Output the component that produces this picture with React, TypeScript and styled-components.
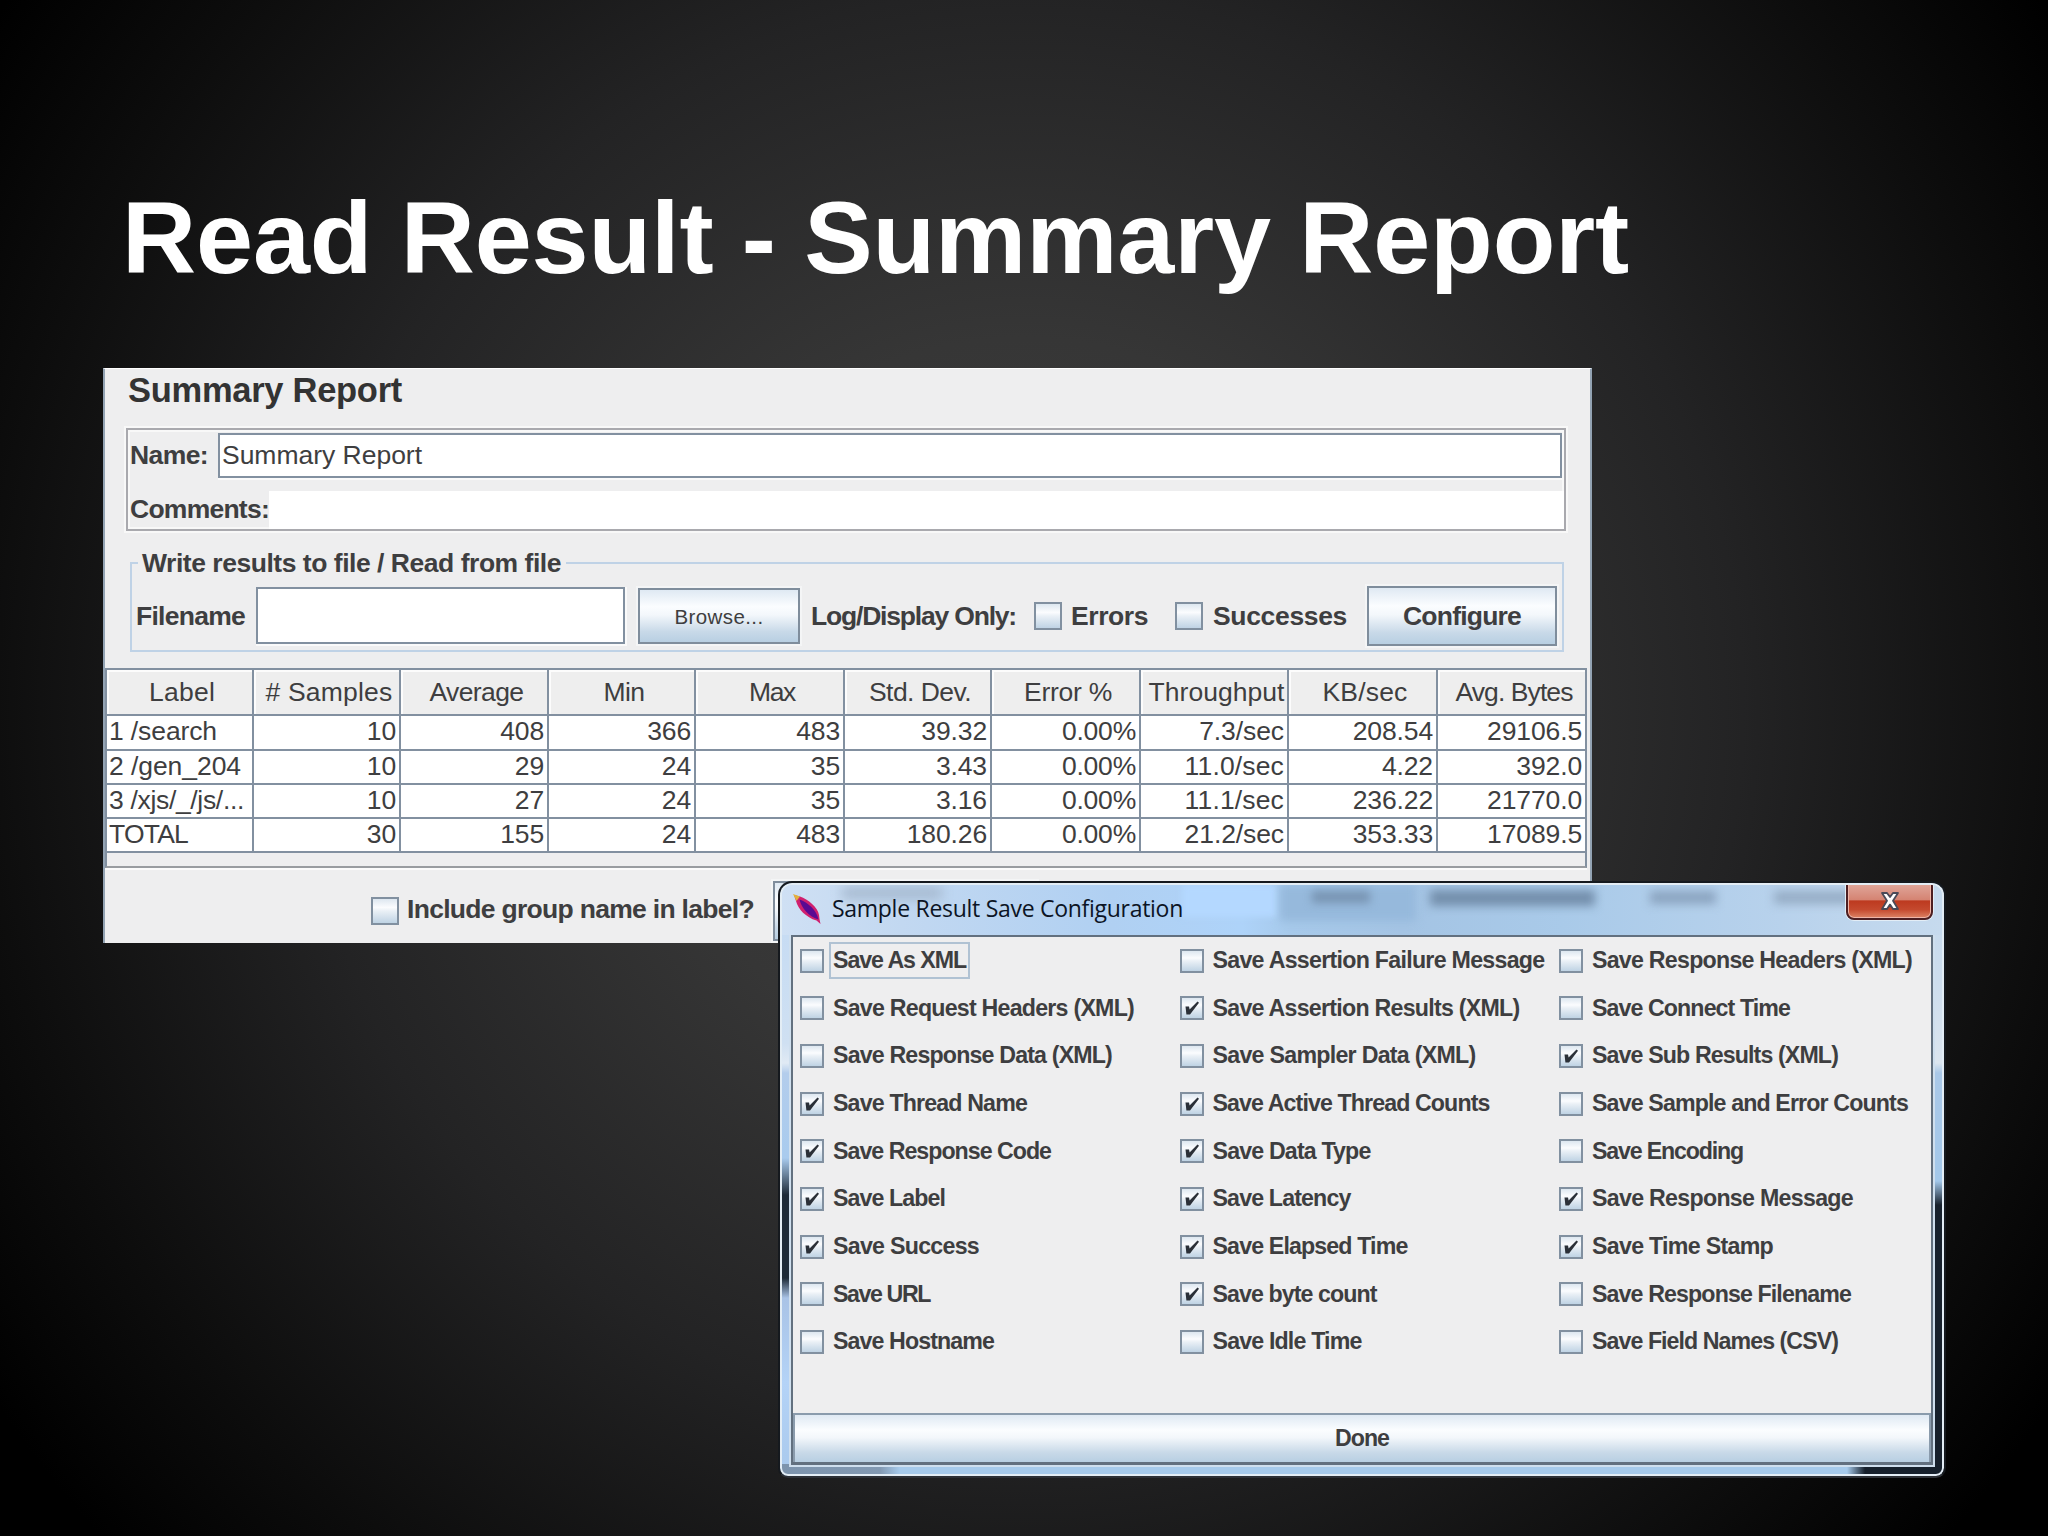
import React, { useLayoutEffect, useRef } from 'react';
import styled, { createGlobalStyle, css } from 'styled-components';

const Global = createGlobalStyle`
  html, body { margin: 0; padding: 0; background: #000; }
  *, *::before, *::after { box-sizing: border-box; }
`;

const sans = `'Liberation Sans', Arial, sans-serif`;
const metal = 'linear-gradient(#dfe9f3 0%, #fbfdff 32%, #f3f7fb 48%, #c8d9e8 80%, #b8cfe2 100%)';
const line = '#8290a0';

const Slide = styled.main`
  position: relative;
  width: 2048px;
  height: 1536px;
  overflow: hidden;
  background: radial-gradient(circle 1240px at 1024px 710px, #3f3f3f 0%, #363636 30%, #232324 58%, #0d0d0d 84%, #000 100%);
  font-family: ${sans};
  color: #333;
`;

const SlideTitle = styled.h1`
  margin: 0;
  padding: 179px 0 0 122px;
  font-size: 102.6px;
  line-height: 118px;
  font-weight: 700;
  color: #fff;
  white-space: nowrap;
`;

const Label = styled.span<{ $size?: number; $bold?: boolean; $family?: string; $color?: string; $left?: number; $lift?: number; $drop?: number }>`
  display: inline-block;
  flex: none;
  white-space: pre;
  font-family: ${p => p.$family ?? sans};
  font-size: ${p => p.$size ?? 26.5}px;
  line-height: 1.15;
  font-weight: ${p => (p.$bold ? 700 : 400)};
  color: ${p => p.$color ?? '#3e3e40'};
  margin-left: ${p => p.$left ?? 0}px;
  padding-bottom: ${p => p.$lift ?? 0}px;
  padding-top: ${p => p.$drop ?? 0}px;
`;

type FitProps = React.ComponentProps<typeof Label> & { w: number; children: string };

/** A label whose tracking is adjusted so that it spans the given width. */
function Fit({ w, children, ...rest }: FitProps) {
  const ref = useRef<HTMLSpanElement>(null);
  useLayoutEffect(() => {
    const el = ref.current;
    if (!el) return;
    el.style.letterSpacing = '0px';
    const natural = el.getBoundingClientRect().width;
    el.style.letterSpacing = `${(w - natural) / children.length}px`;
  }, [w, children]);
  return <Label ref={ref} {...rest}>{children}</Label>;
}

/* ---------- report panel ---------- */

const Panel = styled.section`
  position: absolute;
  left: 103px;
  top: 368px;
  width: 1489px;
  height: 575px;
  display: flex;
  flex-direction: column;
  background: #eeeeef;
  border: solid #93a3b3;
  border-width: 1px 2px 0 2px;
  border-top-color: #fff;
`;

const Heading = styled.header`
  display: flex;
  align-items: center;
  height: 42px;
  padding: 2px 0 0 23px;
`;

const NameGroup = styled.div`
  margin: 17px 24px 0 21px;
  height: 103px;
  border: 2px solid #a9a9ae;
  box-shadow: 0 0 0 2px #f8f8f8, inset 0 0 0 2px #f8f8f8;
  display: flex;
  flex-direction: column;
`;

const NameRow = styled.div`
  display: flex;
  align-items: center;
  height: 50px;
  padding: 0 2px;
`;

const CommentsRow = styled.div`
  display: flex;
  align-items: center;
  height: 38px;
  margin-top: 11px;
  padding-left: 2px;
`;

const TextField = styled.div<{ $w?: number; $h: number; $left?: number }>`
  ${p => (p.$w ? css`width: ${p.$w}px; flex: none;` : css`flex: 1;`)}
  height: ${p => p.$h}px;
  margin-left: ${p => p.$left ?? 0}px;
  display: flex;
  align-items: center;
  padding-left: 2px;
  background: #fff;
  border: 2px solid ${line};
  box-shadow: 1px 1px 0 1px #fafafa;
`;

const CommentsField = styled.div`
  flex: 1;
  height: 38px;
  background: #fff;
`;

const FileGroup = styled.fieldset`
  margin: 18px 26px 0 25px;
  padding: 0;
  height: 103px;
  min-width: 0;
  border: 2px solid #bfd2e6;
`;

const Legend = styled.legend`
  margin-left: 6px;
  padding: 0 5px 0 4px;
  height: 28px;
  line-height: 26px;
  display: flex;
  align-items: center;
`;

const FileRow = styled.div`
  display: flex;
  align-items: center;
  height: 73px;
  padding: 4px 0 0 4px;
`;

const MetalButton = styled.div<{ $w: number; $h: number; $left: number }>`
  flex: none;
  display: flex;
  align-items: center;
  justify-content: center;
  width: ${p => p.$w}px;
  height: ${p => p.$h}px;
  margin-left: ${p => p.$left}px;
  background: ${metal};
  border: 2px solid #7f8d9c;
  box-shadow: 0 0 0 2px #f4f5f6;
`;

const Box = styled.span<{ $size: number; $left?: number }>`
  flex: none;
  display: flex;
  width: ${p => p.$size}px;
  height: ${p => p.$size}px;
  margin-left: ${p => p.$left ?? 0}px;
  background: linear-gradient(#dde7f0 0%, #fbfcfe 35%, #eaf0f6 50%, #bfd3e4 100%);
  border: 2px solid #8190a0;
`;

const Table = styled.div`
  margin: 16px 3px 0 0;
  height: 200px;
  border: 2px solid ${line};
  border-bottom-color: #999ca0;
  box-shadow: 0 2px 0 #fbfbfb;
  display: flex;
  flex-direction: column;
`;

const Row = styled.div<{ $h: number }>`
  display: grid;
  grid-template-columns: 147px 147px 148px 147px 149px 147px 149px 148px 149px 1fr;
  height: ${p => p.$h}px;
  flex: none;
`;

const HeadCell = styled.div`
  display: flex;
  align-items: center;
  justify-content: center;
  padding: 1px 0 0 5px;
  border: solid ${line};
  border-width: 0 2px 2px 0;
  background: #eeeeee;
  box-shadow: inset 3px 3px 0 -1px #fcfcfc;
  overflow: hidden;
  &:last-child { border-right: 0; }
`;

const Cell = styled.div<{ $text?: boolean }>`
  display: flex;
  align-items: center;
  justify-content: ${p => (p.$text ? 'flex-start' : 'flex-end')};
  padding: 0 3px 2px 2px;
  background: #fff;
  border: solid ${line};
  border-width: 0 2px 2px 0;
  &:last-child { border-right: 0; }
`;

const Footer = styled.div`
  display: flex;
  align-items: center;
  height: 60px;
  margin-top: 13px;
  padding-left: 266px;
`;

/* ---------- dialog ---------- */

const Dialog = styled.section`
  position: absolute;
  left: 778px;
  top: 881px;
  width: 1168px;
  height: 597px;
  display: flex;
  flex-direction: column;
  padding: 0 11px 11px 11px;
  border: 2px solid #15191e;
  border-bottom-color: #2c3036;
  border-radius: 14px 14px 10px 10px;
  background:
    linear-gradient(90deg, #7d94ad 0, #8299b2 100px, transparent 120px, transparent 1067px, #16202c 1085px) 0 100% / 100% 12px no-repeat,
    linear-gradient(#c3daf4 0, #cfe0f2 160px, #e0eaf4 180px, #b3cdec 190px, #a9cbee 275px, #1d2a38 312px, #1d2a38 395px, #a9c3e6 415px, #b4d3f7 500px, #a9c9ec 100%) 0 0 / 14px 100% no-repeat,
    linear-gradient(#c4d9ee 0, #cddded 100px, #dbe5ef 180px, #a9c8e8 190px, #a3c8ea 298px, #17212d 322px, #17202b 100%) 100% 0 / 14px 100% no-repeat,
    #a6caeb;
  box-shadow: inset 0 0 0 2px #e3edf5;
`;

const TitleBar = styled.div`
  position: relative;
  height: 50px;
  flex: none;
  margin: 2px -9px 0 -9px;
  border-radius: 10px 10px 0 0;
  display: flex;
  align-items: flex-start;
  padding-left: 11px;
  overflow: hidden;
  background: linear-gradient(90deg, #cfe0f4 0, #c2d8f1 120px, #b0d0f2 330px, #aed3f9 460px, #a6c9ea 510px, #a4c4e4 620px, #a9cae9 780px, #b8d2ec 1000px, #c6daee 100%);
`;

const Ghost = styled.span<{ $x: number; $y: number; $w: number; $h: number; $c: string; $blur?: number }>`
  position: absolute;
  left: ${p => p.$x}px;
  top: ${p => p.$y}px;
  width: ${p => p.$w}px;
  height: ${p => p.$h}px;
  background: ${p => p.$c};
  filter: blur(${p => p.$blur ?? 6}px);
`;

const Feather = styled.svg`
  position: relative;
  flex: none;
  margin-top: 9px;
`;

const TitleText = styled.div`
  position: relative;
  margin: 10px 0 0 9px;
`;

const CloseButton = styled.div`
  position: absolute;
  right: 9px;
  top: -3px;
  width: 87px;
  height: 38px;
  display: flex;
  align-items: center;
  justify-content: center;
  border: 2px solid #4d1f22;
  border-radius: 0 0 8px 8px;
  background: linear-gradient(#e0a79b 0%, #d58473 46%, #bd3a20 50%, #c4492e 75%, #dd8466 100%);
  box-shadow: inset 0 0 0 1px #efb5a8, 0 0 0 1px #e3edf6;
`;

const Client = styled.div`
  flex: 1;
  display: flex;
  flex-direction: column;
  background: #eeeeef;
  border: 2px solid #62707f;
  border-bottom-width: 3px;
  box-shadow: 0 0 0 2px #cfdfee;
`;

const Options = styled.div`
  flex: 1;
  display: grid;
  grid-template-columns: 379.5px 379.5px 1fr;
  grid-auto-rows: 47.67px;
  padding: 0 0 0 7px;
`;

const Option = styled.div`
  display: flex;
  align-items: center;
`;

const OptionText = styled.span<{ $focus?: boolean }>`
  display: flex;
  align-items: center;
  height: 37px;
  margin-left: 5px;
  padding: 0 2px 1px 2px;
  border: 2px solid ${p => (p.$focus ? '#b0c2d3' : 'transparent')};
`;

const DoneButton = styled.div`
  flex: none;
  height: 49px;
  display: flex;
  align-items: center;
  justify-content: center;
  background: ${metal};
  border: 2px solid #8a9bac;
  border-bottom-width: 0;
`;

const columns: [string, number][] = [
  ['Label', 66], ['# Samples', 127], ['Average', 94], ['Min', 41], ['Max', 46],
  ['Std. Dev.', 102], ['Error %', 88], ['Throughput', 136], ['KB/sec', 85], ['Avg. Bytes', 117],
];

const rows: { h: number; cells: string[]; w: number }[] = [
  { h: 35, w: 108, cells: ['1 /search', '10', '408', '366', '483', '39.32', '0.00%', '7.3/sec', '208.54', '29106.5'] },
  { h: 34, w: 132, cells: ['2 /gen_204', '10', '29', '24', '35', '3.43', '0.00%', '11.0/sec', '4.22', '392.0'] },
  { h: 34, w: 135, cells: ['3 /xjs/_/js/...', '10', '27', '24', '35', '3.16', '0.00%', '11.1/sec', '236.22', '21770.0'] },
  { h: 34, w: 79, cells: ['TOTAL', '30', '155', '24', '483', '180.26', '0.00%', '21.2/sec', '353.33', '17089.5'] },
];

type Opt = [string, number, boolean?];
const options: Opt[][] = [
  [['Save As XML', 133], ['Save Assertion Failure Message', 332], ['Save Response Headers (XML)', 320]],
  [['Save Request Headers (XML)', 301], ['Save Assertion Results (XML)', 307, true], ['Save Connect Time', 198]],
  [['Save Response Data (XML)', 279], ['Save Sampler Data (XML)', 263], ['Save Sub Results (XML)', 246, true]],
  [['Save Thread Name', 194, true], ['Save Active Thread Counts', 277, true], ['Save Sample and Error Counts', 316]],
  [['Save Response Code', 218, true], ['Save Data Type', 158, true], ['Save Encoding', 151]],
  [['Save Label', 112, true], ['Save Latency', 138, true], ['Save Response Message', 261, true]],
  [['Save Success', 146, true], ['Save Elapsed Time', 195, true], ['Save Time Stamp', 181, true]],
  [['Save URL', 97], ['Save byte count', 164, true], ['Save Response Filename', 259]],
  [['Save Hostname', 161], ['Save Idle Time', 149], ['Save Field Names (CSV)', 246]],
];

const digitWidth = (s: string) =>
  s.split('').reduce((a, c) => a + (c === '.' || c === '/' ? 7.3 : c === '%' ? 23 : c === 's' || c === 'c' ? 13.2 : 14.6), 0);

const Tick = () => (
  <svg width="20" height="20" viewBox="0 0 20 20">
    <path d="M3.5 8.5 L7 8.5 L7.6 11.5 L15.5 3.6 L17 4.8 L8 16.5 L4.4 16.5 Z" fill="#2b3038" />
  </svg>
);

export default function App() {
  return (
    <>
      <Global />
      <Slide>
        <SlideTitle><Fit w={1507} $size={102.6} $bold $color="#fff">Read Result - Summary Report</Fit></SlideTitle>

        <Panel>
          <Heading><Fit w={274} $size={34.5} $bold $color="#333">Summary Report</Fit></Heading>
          <NameGroup>
            <NameRow>
              <Fit w={78} $bold>Name:</Fit>
              <TextField $h={45} $left={10}><Fit w={200}>Summary Report</Fit></TextField>
            </NameRow>
            <CommentsRow>
              <Fit w={139} $bold $lift={2}>Comments:</Fit>
              <CommentsField />
            </CommentsRow>
          </NameGroup>
          <FileGroup>
            <Legend><Fit w={419} $bold>Write results to file / Read from file</Fit></Legend>
            <FileRow>
              <Fit w={109} $bold $drop={1}>Filename</Fit>
              <TextField $w={369} $h={57} $left={11} />
              <MetalButton $w={162} $h={56} $left={13}><Fit w={89} $size={20.5} $drop={2}>Browse...</Fit></MetalButton>
              <Fit w={205} $bold $left={11} $drop={1}>Log/Display Only:</Fit>
              <Box $size={28} $left={18} />
              <Fit w={77} $bold $left={9} $drop={1}>Errors</Fit>
              <Box $size={28} $left={27} />
              <Fit w={134} $bold $left={10} $drop={1}>Successes</Fit>
              <MetalButton $w={190} $h={60} $left={20}><Fit w={118} $bold $drop={1}>Configure</Fit></MetalButton>
            </FileRow>
          </FileGroup>
          <Table>
            <Row $h={46}>
              {columns.map(([name, w]) => (
                <HeadCell key={name}><Fit w={w}>{name}</Fit></HeadCell>
              ))}
            </Row>
            {rows.map(r => (
              <Row key={r.cells[0]} $h={r.h}>
                {r.cells.map((c, i) => (
                  <Cell key={i} $text={i === 0}><Fit w={i === 0 ? r.w : digitWidth(c)}>{c}</Fit></Cell>
                ))}
              </Row>
            ))}
          </Table>
          <Footer>
            <Box $size={28} />
            <Fit w={347} $bold $left={8} $lift={3}>Include group name in label?</Fit>
            <MetalButton $w={264} $h={60} $left={19} />
          </Footer>
        </Panel>

        <Dialog>
          <TitleBar>
            <Ghost $x={60} $y={2} $w={100} $h={12} $c="#a4b8ce" />
            <Ghost $x={400} $y={0} $w={95} $h={32} $c="#b4d8ff" $blur={3} />
            <Ghost $x={498} $y={0} $w={136} $h={36} $c="#96b9dc" $blur={4} />
            <Ghost $x={530} $y={6} $w={58} $h={12} $c="#7894b2" $blur={4} />
            <Ghost $x={648} $y={5} $w={165} $h={16} $c="#748fac" $blur={5} />
            <Ghost $x={868} $y={6} $w={66} $h={13} $c="#8ba4c0" $blur={5} />
            <Ghost $x={992} $y={6} $w={80} $h={13} $c="#96adc6" $blur={5} />
            <Feather width="30" height="30" viewBox="0 0 30 30">
              <path d="M1 1 L7 2.5 C15 5.5 25 13 26 21 L26.5 25 L27.5 30 L23.5 26.5 C13 23.5 5 15 3 7 Z" fill="#d0206e" />
              <path d="M6.5 5.5 C15 8.5 23.5 16 25.5 25.5 C16 22.5 8.5 14.5 6.5 5.5 Z" fill="#5a0a92" />
              <path d="M0 0 L7 2.5 L3.5 7 Z" fill="#e2b23c" />
            </Feather>
            <TitleText><Fit w={351} $size={23} $family="'Open Sans', 'Noto Sans', sans-serif" $color="#0c1424">Sample Result Save Configuration</Fit></TitleText>
            <CloseButton>
              <svg width="22" height="20" viewBox="0 0 22 20">
                <path d="M3 2 H8 L11 6 L14 2 H19 L14 9.8 L19 18 H14 L11 13.6 L8 18 H3 L8 9.8 Z" fill="#fff" stroke="#4a4a58" strokeWidth="1.8" strokeLinejoin="round" />
              </svg>
            </CloseButton>
          </TitleBar>
          <Client>
            <Options>
              {options.flat().map(([name, w, on], i) => (
                <Option key={name}>
                  <Box $size={24}>{on && <Tick />}</Box>
                  <OptionText $focus={i === 0}><Fit w={w} $size={23.2} $bold>{name}</Fit></OptionText>
                </Option>
              ))}
            </Options>
            <DoneButton><Fit w={54} $size={23.2} $bold>Done</Fit></DoneButton>
          </Client>
        </Dialog>
      </Slide>
    </>
  );
}
